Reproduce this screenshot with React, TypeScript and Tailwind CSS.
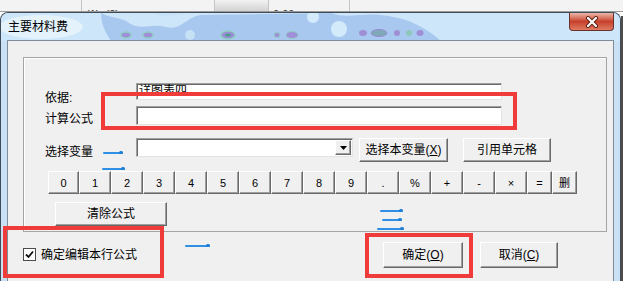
import React from "react";

const raised =
  "border border-t-white border-l-white border-r-[#696969] border-b-[#696969] bg-[#f0f0f0] shadow-[inset_-1px_-1px_0_#a0a0a0]";
const sunken =
  "border border-t-[#a0a0a0] border-l-[#a0a0a0] border-r-[#e3e3e3] border-b-[#e3e3e3] bg-white shadow-[inset_1px_1px_0_#696969]";

const keys = [
  { k: "0", w: "w-[31px]" },
  { k: "1", w: "w-[32px]" },
  { k: "2", w: "w-[32px]" },
  { k: "3", w: "w-[32px]" },
  { k: "4", w: "w-[32px]" },
  { k: "5", w: "w-[32px]" },
  { k: "6", w: "w-[32px]" },
  { k: "7", w: "w-[32px]" },
  { k: "8", w: "w-[32px]" },
  { k: "9", w: "w-[32px]" },
  { k: ".", w: "w-[32px]" },
  { k: "%", w: "w-[32px]" },
  { k: "+", w: "w-[32px]" },
  { k: "-", w: "w-[32px]" },
  { k: "×", w: "w-[32px]" },
  { k: "=", w: "w-[25px]" },
  { k: "删", w: "w-[25px]" },
];

// little blue pen strokes drawn on top of the screenshot
const marks = [
  "left-[103px] top-[152px] w-[20px]",
  "left-[102px] top-[168px] w-[23px]",
  "left-[185px] top-[245px] w-[25px]",
  "left-[380px] top-[210px] w-[23px]",
  "left-[382px] top-[219px] w-[20px]",
  "left-[377px] top-[228px] w-[27px]",
];

const TitleTexture = () => (
  <svg className="absolute left-0 top-0" width="621" height="28" viewBox="0 0 621 28">
    <rect width="621" height="28" fill="#cde6f9" />
    <ellipse cx="40" cy="14" rx="42" ry="12" fill="#e4f2fc" />
    <path d="M100 0 C112 6 120 4 128 10 C140 18 150 10 165 14 C180 18 185 4 200 2 L330 0 C345 6 360 0 380 2 C400 4 420 10 440 28 L110 28 C105 20 100 12 100 0 Z" fill="#a9c8ef" />
    <path d="M150 0 C160 6 175 2 185 0 Z" fill="#c8e2f7" />
    <circle cx="338" cy="16" r="8" fill="#d3eafb" />
    <circle cx="312" cy="4" r="6" fill="#d3eafb" />
    <circle cx="189" cy="22" r="5" fill="#c6e0f6" />
    <ellipse cx="125" cy="22" rx="5" ry="3" fill="#a08fd8" stroke="#8fcdc4" strokeWidth="1.5" />
    <ellipse cx="147" cy="22" rx="5" ry="3" fill="#a08fd8" stroke="#8fcdc4" strokeWidth="1.5" />
    <ellipse cx="227" cy="22" rx="7" ry="4" fill="#9b8cd6" stroke="#8fcdc4" strokeWidth="1.5" />
    <ellipse cx="227" cy="22" rx="3" ry="1.5" fill="#4f9a94" />
    <ellipse cx="276" cy="22" rx="3" ry="2.5" fill="#a08fd8" stroke="#8fcdc4" />
    <ellipse cx="291" cy="22" rx="6" ry="3.5" fill="#a08fd8" stroke="#8fcdc4" />
    <ellipse cx="362" cy="20" rx="4" ry="3" fill="#9e8fd4" />
    <ellipse cx="378" cy="20" rx="8" ry="3.5" fill="#7fa8b8" stroke="#9b8cd6" />
    <ellipse cx="396" cy="20" rx="3" ry="3" fill="#9e8fd4" />
    <ellipse cx="408" cy="20" rx="3" ry="3" fill="#8ec6b8" />
    <ellipse cx="419" cy="20" rx="3.5" ry="3" fill="#9e8fd4" />
  </svg>
);

const CloseButton = () => (
  <div className="relative flex h-[18px] w-[45px] items-center justify-center rounded-b-[4px] border border-t-0 border-[#6b3026] bg-linear-to-b from-[#ebb7aa] via-[#c6402b] to-[#df7a63]">
    <svg width="14" height="12" viewBox="0 0 14 12">
      <path d="M3 2 L11 10 M11 2 L3 10" stroke="#5a1d14" strokeWidth="4" strokeLinecap="round" />
      <path d="M3 2 L11 10 M11 2 L3 10" stroke="#ffffff" strokeWidth="2.2" strokeLinecap="round" />
    </svg>
  </div>
);

const Checkbox = () => (
  <div className="flex h-[13px] w-[13px] items-center justify-center border border-[#4b4b4b] bg-white">
    <svg width="9" height="9" viewBox="0 0 9 9">
      <path d="M1 4.5 L3.5 7 L8 1.5" stroke="#111" strokeWidth="1.8" fill="none" />
    </svg>
  </div>
);

const App = () => {
  return (
    <div className="relative h-[281px] w-[636px] overflow-hidden bg-white font-['Liberation_Sans','Noto_Sans_CJK_SC',sans-serif] text-[12px] text-black">
      {/* sheet behind the dialog */}
      <div className="flex h-[12px] w-[623px] overflow-hidden border-b border-[#9b9b9b] bg-[#f3f3f3] text-[11px] leading-[12px] text-[#333]">
        <div className="w-[82px] border-r border-[#c4c4c4]" />
        <div className="w-[133px] border-r border-[#c4c4c4] pl-[4px] pt-[8px]">(1)&nbsp;&nbsp;(2)</div>
        <div className="w-[54px] border-r border-[#c4c4c4] bg-linear-to-b from-[#f2f2f2] to-[#d3d3d3]" />
        <div className="w-[81px] border-r border-[#c4c4c4] pl-[4px] pt-[8px]">0.00</div>
        <div className="flex-1" />
      </div>

      <div className="flex">
        <div className="relative h-[269px] w-[621px] overflow-hidden rounded-t-[8px] border border-b-0 border-[#3f4b57] bg-[#c9e0f5]">
          <TitleTexture />
          <div className="relative flex h-[27px] items-start justify-between pl-[7px] pr-[6px]">
            <span className="mt-[7px] leading-[14px]">主要材料费</span>
            <CloseButton />
          </div>

          <div className="relative ml-[6px] h-[242px] w-[607px] border border-b-0 border-[#7f8c99] bg-[#f0f0f0]">
            {/* group box */}
            <div className="ml-[15px] mt-[16px] h-[175px] w-[584px] border border-[#a5a5a5] shadow-[inset_1px_1px_0_#ffffff]">
              <div className="mt-[25px] flex h-[17px] pl-[21px]">
                <span className="mt-[8px] w-[91px] leading-[14px]">依据:</span>
                <div className={`${sunken} h-[17px] w-[366px] overflow-hidden pl-[2px] leading-[14px]`}>详图表四</div>
              </div>
              <div className="mt-[6px] flex h-[19px] pl-[21px]">
                <span className="mt-[6px] w-[91px] leading-[14px]">计算公式</span>
                <div className={`${sunken} h-[19px] w-[366px]`} />
              </div>
              <div className="mt-[13px] flex h-[24px] items-start pl-[21px]">
                <span className="mt-[7px] w-[91px] leading-[14px]">选择变量</span>
                <div className={`${sunken} flex h-[19px] w-[217px] items-center justify-end pr-[1px]`}>
                  <div className={`${raised} flex h-[15px] w-[16px] items-center justify-center`}>
                    <svg width="7" height="4" viewBox="0 0 7 4">
                      <path d="M0 0 L7 0 L3.5 4 Z" fill="#000" />
                    </svg>
                  </div>
                </div>
                <button className={`${raised} ml-[6px] flex h-[24px] w-[89px] items-center justify-center leading-[14px]`}>
                  选择本变量(<span className="underline">X</span>)
                </button>
                <button className={`${raised} ml-[15px] flex h-[24px] w-[88px] items-center justify-center leading-[14px]`}>
                  引用单元格
                </button>
              </div>
              <div className="mt-[9px] flex h-[23px] pl-[24px]">
                {keys.map((item) => (
                  <div
                    key={item.k}
                    className={`${raised} ${item.w} flex h-[23px] items-center justify-center text-[11px] leading-[12px]`}
                  >
                    {item.k}
                  </div>
                ))}
              </div>
              <button className={`${raised} ml-[31px] mt-[8px] flex h-[24px] w-[112px] items-center justify-center leading-[14px]`}>
                清除公式
              </button>
            </div>

            <div className="mt-[10px] flex items-start pl-[15px]">
              <div className="mt-[6px] flex h-[13px] w-[360px] items-center">
                <Checkbox />
                <span className="ml-[5px] leading-[14px]">确定编辑本行公式</span>
              </div>
              <button className={`${raised} flex h-[26px] w-[80px] items-center justify-center leading-[14px]`}>
                确定(<span className="underline">O</span>)
              </button>
              <button className={`${raised} ml-[17px] flex h-[26px] w-[78px] items-center justify-center leading-[14px]`}>
                取消(<span className="underline">C</span>)
              </button>
            </div>
          </div>
        </div>
        <div className="mt-[4px] h-[265px] w-[2px] bg-[#4d4d4d]" />
      </div>

      {/* annotations */}
      <div className="absolute left-[101px] top-[92px] h-[38px] w-[416px] border-[4px] border-[#f03b3b]" />
      <div className="absolute left-[3px] top-[226px] h-[52px] w-[161px] border-[4px] border-[#f03b3b]" />
      <div className="absolute left-[365px] top-[233px] h-[45px] w-[108px] border-[4px] border-[#f03b3b]" />
      {marks.map((m) => (
        <div key={m} className={`absolute ${m} h-[2px] rounded-full bg-[#2e8fe4]`}>
          <div className="absolute right-0 top-[-1px] h-[3px] w-[4px] rounded-full bg-[#1f7fd8]" />
        </div>
      ))}
    </div>
  );
};

export default App;
